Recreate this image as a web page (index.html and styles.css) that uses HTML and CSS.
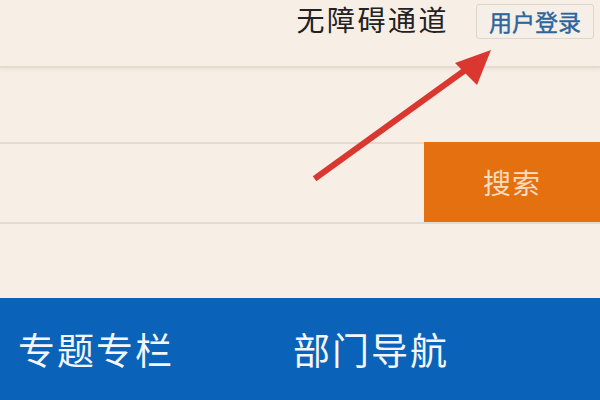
FILE: index.html
```html
<!DOCTYPE html>
<html lang="zh-CN">
  <head>
    <meta charset="UTF-8" />
    <meta name="viewport" content="width=device-width, initial-scale=1.0" />
    <title>无障碍通道</title>
    <link rel="stylesheet" href="styles.css">
  </head>
  <body>
    <div class="page">
      <div class="topbar">
        <a class="access-link" href="#">无障碍通道</a>
        <button class="login-btn">用户登录</button>
      </div>

      <div class="spacer"></div>

      <form class="search-row">
        <input class="search-input" type="text" />
        <button class="search-btn" type="button">搜索</button>
      </form>

      <div class="spacer"></div>

      <div class="nav">
        <a class="nav-item" href="#">专题专栏</a>
        <a class="nav-item" href="#">部门导航</a>
      </div>

      <!-- annotation arrow pointing at the login button -->
      <svg class="arrow" width="600" height="400" viewBox="0 0 600 400">
        <line x1="317" y1="177" x2="468" y2="68" stroke="#d9372f" stroke-width="6" stroke-linecap="square" />
        <polygon points="491,50 455,63 477,85" fill="#d9372f" />
      </svg>
    </div>
  </body>
</html>
```

FILE: styles.css
```css
body {
  margin: 0;
  background-color: #f7eee5;
  font-family: "Noto Sans CJK SC", "Noto Sans", sans-serif;
}

.page {
  position: relative;
  width: 600px;
  height: 400px;
  overflow: hidden;
}

.topbar {
  height: 68px;
  display: flex;
  justify-content: flex-end;
  align-items: flex-start;
  padding-top: 4px;
  box-sizing: border-box;
  border-bottom: 2px solid #e4dbd1;
  box-shadow: 0 2px 3px rgba(120, 100, 80, 0.08);
}

.access-link {
  color: #222;
  text-decoration: none;
  font-size: 28px;
  letter-spacing: 2.5px;
  line-height: 30px;
  margin-right: 27px;
}

.login-btn {
  width: 118px;
  height: 35px;
  margin-right: 6px;
  padding: 0;
  border: 1px solid #ddd6cd;
  border-radius: 3px;
  background-color: #f6efe7;
  color: #2b659c;
  font-family: inherit;
  font-size: 23px;
  font-weight: normal;
  -webkit-text-stroke: 0.4px #2b659c;
  line-height: 33px;
}

.spacer {
  height: 74px;
}

.search-row {
  margin: 0;
  height: 82px;
  display: flex;
  border-top: 2px solid #e3dad0;
  border-bottom: 2px solid #e3dad0;
  box-sizing: border-box;
}

.search-input {
  flex: 1;
  border: none;
  background-color: transparent;
  outline: none;
}

.search-btn {
  width: 176px;
  margin-top: -2px;
  border: none;
  background-color: #e5700f;
  color: #f7dcc0;
  font-family: inherit;
  font-size: 28px;
  letter-spacing: 1px;
}

.nav {
  height: 102px;
  display: flex;
  align-items: center;
  padding-left: 18px;
  background-color: #0a63b8;
}

.nav-item {
  width: 275px;
  color: #f4f6fa;
  text-decoration: none;
  font-size: 37px;
  letter-spacing: 2px;
}

.arrow {
  position: absolute;
  left: 0;
  top: 0;
  pointer-events: none;
}
```
